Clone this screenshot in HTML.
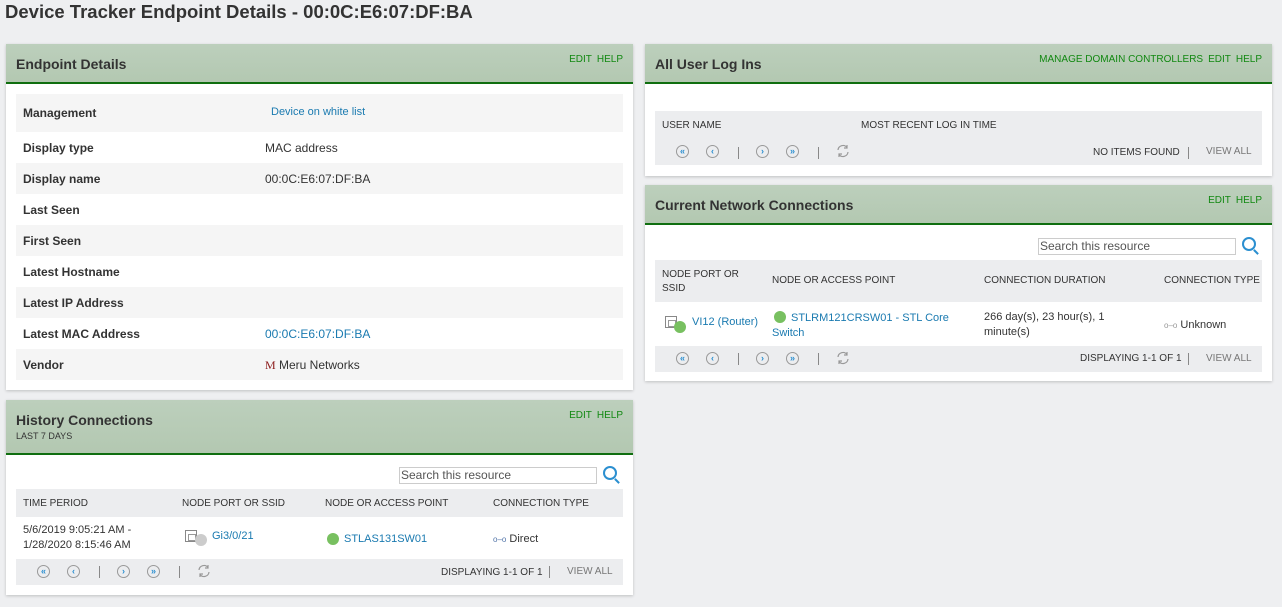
<!DOCTYPE html>
<html><head><meta charset="utf-8">
<style>
*{box-sizing:border-box;margin:0;padding:0}
body{width:1282px;height:607px;background:#eeeff1;font-family:"Liberation Sans",sans-serif;color:#222;position:relative;overflow:hidden;font-size:12px}
h1{position:absolute;left:5px;top:1px;font-size:18.5px;font-weight:bold;color:#333}
.panel{position:absolute;background:#fff;box-shadow:0 1px 3px rgba(0,0,0,.2)}
.hdr{position:absolute;left:0;right:0;top:0;background:linear-gradient(#bccfbc,#b3c8b1);border-bottom:2px solid #0f6e0f}
.ttl{position:absolute;left:10px;font-size:14px;font-weight:bold;color:#333}
.lk{position:absolute;right:10px;top:10px;font-size:10px;color:#118811;white-space:nowrap}
.lk i{font-style:normal;margin-left:5px}
.row{position:absolute;left:10px;width:607px;height:31px}
.row.g{background:#f5f5f5}
.row b{position:absolute;left:7px;top:9px;font-size:12px;color:#333}
.row span{position:absolute;left:249px;top:9px;font-size:12px;color:#333}
.blue{color:#1a7ab0!important}
.gbar{position:absolute;background:#ecedef}
.th{position:absolute;font-size:10px;color:#333}
.pg{position:absolute;width:13px;height:13px;border:1px solid #999;border-radius:50%;font-size:9px;color:#2b8fd0;text-align:center;line-height:11px;font-weight:bold}
.sep{position:absolute;width:1px;height:12px;background:#888}
.ref{position:absolute;width:14px;height:14px}
.srch{position:absolute;width:198px;height:17px;border:1px solid #ccc;font-size:12px;color:#555;padding-left:1px;line-height:15px}
.mag{position:absolute;width:14px;height:14px;border:2px solid #2b8fd0;border-radius:50%}
.mag:after{content:"";position:absolute;width:6px;height:2px;background:#2b8fd0;transform:rotate(45deg);left:9px;top:12px}
.dot{position:absolute;width:12px;height:12px;border-radius:50%;background:#78c060}
.port{position:absolute;width:12px;height:12px;border:1px solid #888;background:#fff}
.port:after{content:"";position:absolute;left:2px;top:3px;width:6px;height:5px;border:1px solid #999}
.tx{position:absolute;font-size:12px;color:#333;line-height:15px}
</style></head><body>
<h1>Device Tracker Endpoint Details - 00:0C:E6:07:DF:BA</h1>

<div class="panel" style="left:6px;top:44px;width:627px;height:346px">
 <div class="hdr" style="height:40px"><div class="ttl" style="top:12px">Endpoint Details</div><div class="lk">EDIT<i>HELP</i></div></div>
 <div class="row g" style="top:50px;height:38px"><b style="top:12px">Management</b><span class="blue" style="left:255px;top:12px;font-size:11px">Device on white list</span></div>
 <div class="row" style="top:88px"><b>Display type</b><span>MAC address</span></div>
 <div class="row g" style="top:119px"><b>Display name</b><span>00:0C:E6:07:DF:BA</span></div>
 <div class="row" style="top:150px"><b>Last Seen</b></div>
 <div class="row g" style="top:181px"><b>First Seen</b></div>
 <div class="row" style="top:212px"><b>Latest Hostname</b></div>
 <div class="row g" style="top:243px"><b>Latest IP Address</b></div>
 <div class="row" style="top:274px"><b>Latest MAC Address</b><span class="blue">00:0C:E6:07:DF:BA</span></div>
 <div class="row g" style="top:305px"><b>Vendor</b><span><i style="font-style:normal;font-family:'Liberation Serif',serif;color:#8b1a1a;font-size:12px">M</i> Meru Networks</span></div>
</div>

<div class="panel" style="left:645px;top:44px;width:627px;height:132px">
 <div class="hdr" style="height:40px"><div class="ttl" style="top:12px">All User Log Ins</div><div class="lk">MANAGE DOMAIN CONTROLLERS<i>EDIT</i><i>HELP</i></div></div>
 <div class="gbar" style="left:10px;top:67px;width:607px;height:54px"></div>
 <div class="th" style="left:17px;top:76px">USER NAME</div>
 <div class="th" style="left:216px;top:76px">MOST RECENT LOG IN TIME</div>
 <div class="pg" style="left:31px;top:101px">«</div><div class="pg" style="left:61px;top:101px">‹</div>
 <div class="sep" style="left:93px;top:103px"></div>
 <div class="pg" style="left:111px;top:101px">›</div><div class="pg" style="left:141px;top:101px">»</div>
 <div class="sep" style="left:173px;top:103px"></div>
 <svg class="ref" style="left:191px;top:100px" viewBox="0 0 14 14"><path d="M2 6A5 5 0 0 1 11 3.5M12 8A5 5 0 0 1 3 10.5M11 1v3H8M3 13v-3h3" fill="none" stroke="#999" stroke-width="1.2"/></svg>
 <div class="th" style="left:448px;top:103px">NO ITEMS FOUND</div>
 <div class="sep" style="left:543px;top:103px"></div>
 <div class="th" style="left:561px;top:102px;color:#777">VIEW ALL</div>
</div>

<div class="panel" style="left:645px;top:185px;width:627px;height:196px">
 <div class="hdr" style="height:40px"><div class="ttl" style="top:12px">Current Network Connections</div><div class="lk">EDIT<i>HELP</i></div></div>
 <div class="srch" style="left:393px;top:53px">Search this resource</div><div class="mag" style="left:597px;top:52px"></div>
 <div class="gbar" style="left:10px;top:75px;width:607px;height:42px"></div>
 <div class="th" style="left:17px;top:83px;line-height:14px">NODE PORT OR<br>SSID</div>
 <div class="th" style="left:127px;top:90px">NODE OR ACCESS POINT</div>
 <div class="th" style="left:339px;top:90px">CONNECTION DURATION</div>
 <div class="th" style="left:519px;top:90px">CONNECTION TYPE</div>
 <div class="port" style="left:20px;top:131px"></div><div class="dot" style="left:29px;top:136px"></div>
 <div class="tx blue" style="left:47px;top:130px;font-size:11px">VI12 (Router)</div>
 <div class="dot" style="left:129px;top:126px"></div>
 <div class="tx blue" style="left:127px;top:126px;font-size:11px;text-indent:19px;width:180px">STLRM121CRSW01 - STL Core Switch</div>
 <div class="tx" style="left:339px;top:125px;font-size:11px;width:150px">266 day(s), 23 hour(s), 1 minute(s)</div>
 <div class="tx" style="left:519px;top:133px;font-size:11px"><span style="color:#999;font-size:8px">o–o</span> Unknown</div>
 <div class="gbar" style="left:10px;top:161px;width:607px;height:26px"></div>
 <div class="pg" style="left:31px;top:167px">«</div><div class="pg" style="left:61px;top:167px">‹</div>
 <div class="sep" style="left:93px;top:168px"></div>
 <div class="pg" style="left:111px;top:167px">›</div><div class="pg" style="left:141px;top:167px">»</div>
 <div class="sep" style="left:173px;top:168px"></div>
 <svg class="ref" style="left:191px;top:166px" viewBox="0 0 14 14"><path d="M2 6A5 5 0 0 1 11 3.5M12 8A5 5 0 0 1 3 10.5M11 1v3H8M3 13v-3h3" fill="none" stroke="#999" stroke-width="1.2"/></svg>
 <div class="th" style="left:435px;top:168px">DISPLAYING 1-1 OF 1</div>
 <div class="sep" style="left:543px;top:168px"></div>
 <div class="th" style="left:561px;top:168px;color:#777">VIEW ALL</div>
</div>

<div class="panel" style="left:6px;top:400px;width:627px;height:195px">
 <div class="hdr" style="height:55px"><div class="ttl" style="top:12px">History Connections</div><div class="th" style="left:10px;top:31px;font-size:9px">LAST 7 DAYS</div><div class="lk">EDIT<i>HELP</i></div></div>
 <div class="srch" style="left:393px;top:67px">Search this resource</div><div class="mag" style="left:597px;top:66px"></div>
 <div class="gbar" style="left:10px;top:89px;width:607px;height:28px"></div>
 <div class="th" style="left:17px;top:98px">TIME PERIOD</div>
 <div class="th" style="left:176px;top:98px">NODE PORT OR SSID</div>
 <div class="th" style="left:319px;top:98px">NODE OR ACCESS POINT</div>
 <div class="th" style="left:487px;top:98px">CONNECTION TYPE</div>
 <div class="tx" style="left:17px;top:123px;font-size:11px">5/6/2019 9:05:21 AM -<br>1/28/2020 8:15:46 AM</div>
 <div class="port" style="left:179px;top:130px"></div><div class="dot" style="left:189px;top:134px;background:#ccc"></div>
 <div class="tx blue" style="left:206px;top:129px;font-size:11px">Gi3/0/21</div>
 <div class="dot" style="left:321px;top:133px"></div>
 <div class="tx blue" style="left:338px;top:132px;font-size:11px">STLAS131SW01</div>
 <div class="tx" style="left:487px;top:132px;font-size:11px"><span style="color:#57a;font-size:8px">o–o</span> Direct</div>
 <div class="gbar" style="left:10px;top:159px;width:607px;height:26px"></div>
 <div class="pg" style="left:31px;top:165px">«</div><div class="pg" style="left:61px;top:165px">‹</div>
 <div class="sep" style="left:93px;top:166px"></div>
 <div class="pg" style="left:111px;top:165px">›</div><div class="pg" style="left:141px;top:165px">»</div>
 <div class="sep" style="left:173px;top:166px"></div>
 <svg class="ref" style="left:191px;top:164px" viewBox="0 0 14 14"><path d="M2 6A5 5 0 0 1 11 3.5M12 8A5 5 0 0 1 3 10.5M11 1v3H8M3 13v-3h3" fill="none" stroke="#999" stroke-width="1.2"/></svg>
 <div class="th" style="left:435px;top:167px">DISPLAYING 1-1 OF 1</div>
 <div class="sep" style="left:543px;top:166px"></div>
 <div class="th" style="left:561px;top:166px;color:#777">VIEW ALL</div>
</div>
</body></html>
